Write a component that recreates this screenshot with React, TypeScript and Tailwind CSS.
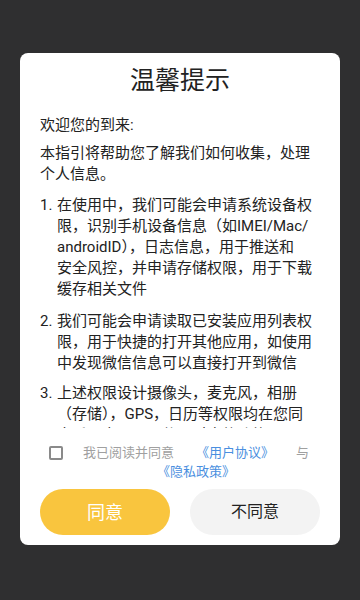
export default function App() {
	return (
		<div
			className="w-[360px] h-[600px] bg-[#2f2f30] pt-[53px] px-5"
			style={{ fontFamily: "Roboto, 'Noto Sans CJK SC', sans-serif" }}
		>
			{/* 弹窗 */}
			<div className="bg-white rounded-lg w-[320px] h-[492px] flex flex-col">
				<h1 className="text-center text-[25px] leading-8 text-[#222] mt-3">温馨提示</h1>

				<div className="mt-[15px] h-[316px] overflow-hidden px-5 pt-[3px] text-[15px] leading-[21px] text-[#222]">
					<p className="mb-[7px]">欢迎您的到来:</p>
					<p className="mb-[10px]">
						本指引将帮助您了解我们如何收集，处理
						<br />
						个人信息。
					</p>
					<div className="flex mb-[11px]">
						<span className="w-[17px] shrink-0">1.</span>
						<p className="whitespace-nowrap">
							在使用中，我们可能会申请系统设备权
							<br />
							限，识别手机设备信息（如IMEI/Mac/
							<br />
							androidID），日志信息，用于推送和
							<br />
							安全风控，并申请存储权限，用于下载
							<br />
							缓存相关文件
						</p>
					</div>
					<div className="flex mb-[9px]">
						<span className="w-[17px] shrink-0">2.</span>
						<p className="whitespace-nowrap">
							我们可能会申请读取已安装应用列表权
							<br />
							限，用于快捷的打开其他应用，如使用
							<br />
							中发现微信信息可以直接打开到微信
						</p>
					</div>
					<div className="flex">
						<span className="w-[17px] shrink-0">3.</span>
						<p className="whitespace-nowrap">
							上述权限设计摄像头，麦克风，相册
							<br />
							（存储），GPS，日历等权限均在您同
							<br />
							意后开启，用于使用对应的功能
						</p>
					</div>
				</div>

				{/* 协议勾选 */}
				<div className="flex items-start mt-[15px] pl-[29px] pr-[18px]">
					<div className="w-[14px] h-[14px] mt-[3px] border-2 border-[#8a8a8a] rounded-[2px] shrink-0" />
					<div className="flex-1 ml-[7px] text-center text-[13px] leading-[19px]">
						<span className="text-[#a0a0a0] mr-[22px]">我已阅读并同意</span>
						<span className="text-[#4a8fe0] mr-[22px]">《用户协议》</span>
						<span className="text-[#a0a0a0]">与</span>
						<span className="block text-[#4a8fe0]">《隐私政策》</span>
					</div>
				</div>

				{/* 按钮 */}
				<div className="flex justify-between px-5 mt-[8px]">
					<button
						type="button"
						className="w-[130px] h-[46px] rounded-full bg-[#f9c53e] text-white text-[18px]"
					>
						同意
					</button>
					<button
						type="button"
						className="w-[130px] h-[46px] rounded-full bg-[#f3f3f3] text-[#222] text-[16px]"
					>
						不同意
					</button>
				</div>
			</div>
		</div>
	);
}
